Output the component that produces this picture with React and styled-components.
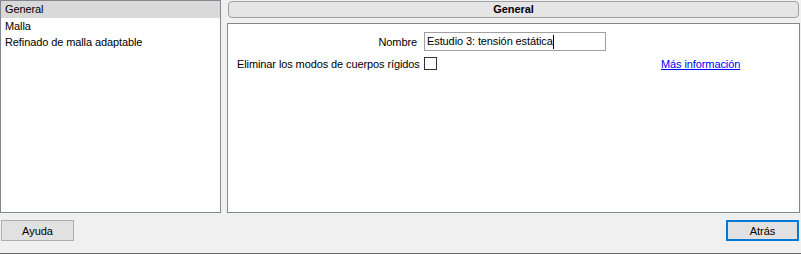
import React from 'react';
import styled, { createGlobalStyle } from 'styled-components';

const GlobalStyle = createGlobalStyle`
  html, body {
    margin: 0;
    padding: 0;
    background: #f0f0f0;
  }
  body {
    font-family: "Liberation Sans", Arial, sans-serif;
    font-size: 11px;
    letter-spacing: -0.1px;
    color: #000;
  }
`;

const pages = ['General', 'Malla', 'Refinado de malla adaptable'];

const App = () => {
  return (
    <Window>
      <GlobalStyle />
      <Body>
        <PageList>
          {pages.map((p, i) => (
            <PageItem key={p} $selected={i === 0}>{p}</PageItem>
          ))}
        </PageList>
        <RightColumn>
          <TitleBar>General</TitleBar>
          <ContentPanel>
            <Form>
              <Label>Nombre</Label>
              <TextBox>
                Estudio 3: tensión estática<Caret />
              </TextBox>
              <span />
              <Label>Eliminar los modos de cuerpos rígidos</Label>
              <CheckBox />
              <MoreLink href="#">Más información</MoreLink>
            </Form>
          </ContentPanel>
        </RightColumn>
      </Body>
      <Footer>
        <Button>Ayuda</Button>
        <Button $focused>Atrás</Button>
      </Footer>
      <BottomStrip />
    </Window>
  );
};

const Window = styled.div`
  width: 801px;
  height: 254px;
  display: flex;
  flex-direction: column;
  background: #f0f0f0;
  overflow: hidden;
`;

const Body = styled.div`
  display: flex;
  height: 213px;
  gap: 6px;
`;

const PageList = styled.div`
  width: 221px;
  flex-shrink: 0;
  box-sizing: border-box;
  border: 1px solid #828790;
  background: #fff;
  display: flex;
  flex-direction: column;
`;

const PageItem = styled.div`
  height: 16px;
  line-height: 16px;
  padding-left: 4px;
  white-space: nowrap;
  background: ${p => (p.$selected ? '#d9d9d9' : 'transparent')};
  &:first-child {
    height: 17px;
  }
`;

const RightColumn = styled.div`
  flex: 1;
  min-width: 0;
  display: flex;
  flex-direction: column;
  gap: 5px;
  margin-right: 1px;
`;

const TitleBar = styled.div`
  margin: 1px 1px 0 1px;
  height: 17px;
  box-sizing: border-box;
  border: 1px solid #a0a0a0;
  border-radius: 4px;
  background: #e5e5e5;
  font-weight: bold;
  text-align: center;
  line-height: 15px;
`;

const ContentPanel = styled.div`
  flex: 1;
  box-sizing: border-box;
  border: 1px solid #828790;
  background: #fff;
  padding: 8px 0 0 9px;
`;

const Form = styled.div`
  display: grid;
  grid-template-columns: 180px auto 1fr;
  column-gap: 7px;
  row-gap: 6px;
  align-items: center;
`;

const Label = styled.span`
  white-space: nowrap;
  text-align: right;
`;

const TextBox = styled.div`
  width: 182px;
  height: 19px;
  box-sizing: border-box;
  border: 1px solid #a0a0a0;
  padding-left: 2px;
  line-height: 17px;
  display: flex;
  align-items: center;
  white-space: nowrap;
`;

const Caret = styled.span`
  display: inline-block;
  width: 1px;
  height: 14px;
  background: #000;
`;

const CheckBox = styled.span`
  width: 13px;
  height: 13px;
  box-sizing: border-box;
  border: 1px solid #333;
  background: #fff;
`;

const MoreLink = styled.a`
  justify-self: start;
  margin-left: 48px;
  white-space: nowrap;
  color: #0000ff;
  text-decoration: underline;
`;

const Footer = styled.div`
  display: flex;
  justify-content: space-between;
  padding: 7px 2px 0 1px;
`;

const Button = styled.button`
  width: 73px;
  height: 21px;
  box-sizing: border-box;
  border: ${p => (p.$focused ? '2px solid #0078d7' : '1px solid #adadad')};
  background: #e1e1e1;
  font-family: "Liberation Sans", Arial, sans-serif;
  font-size: 11px;
  color: #000;
  padding: 0;
`;

const BottomStrip = styled.div`
  margin-top: auto;
  height: 1px;
  background: #6a6a6a;
`;

export default App;
